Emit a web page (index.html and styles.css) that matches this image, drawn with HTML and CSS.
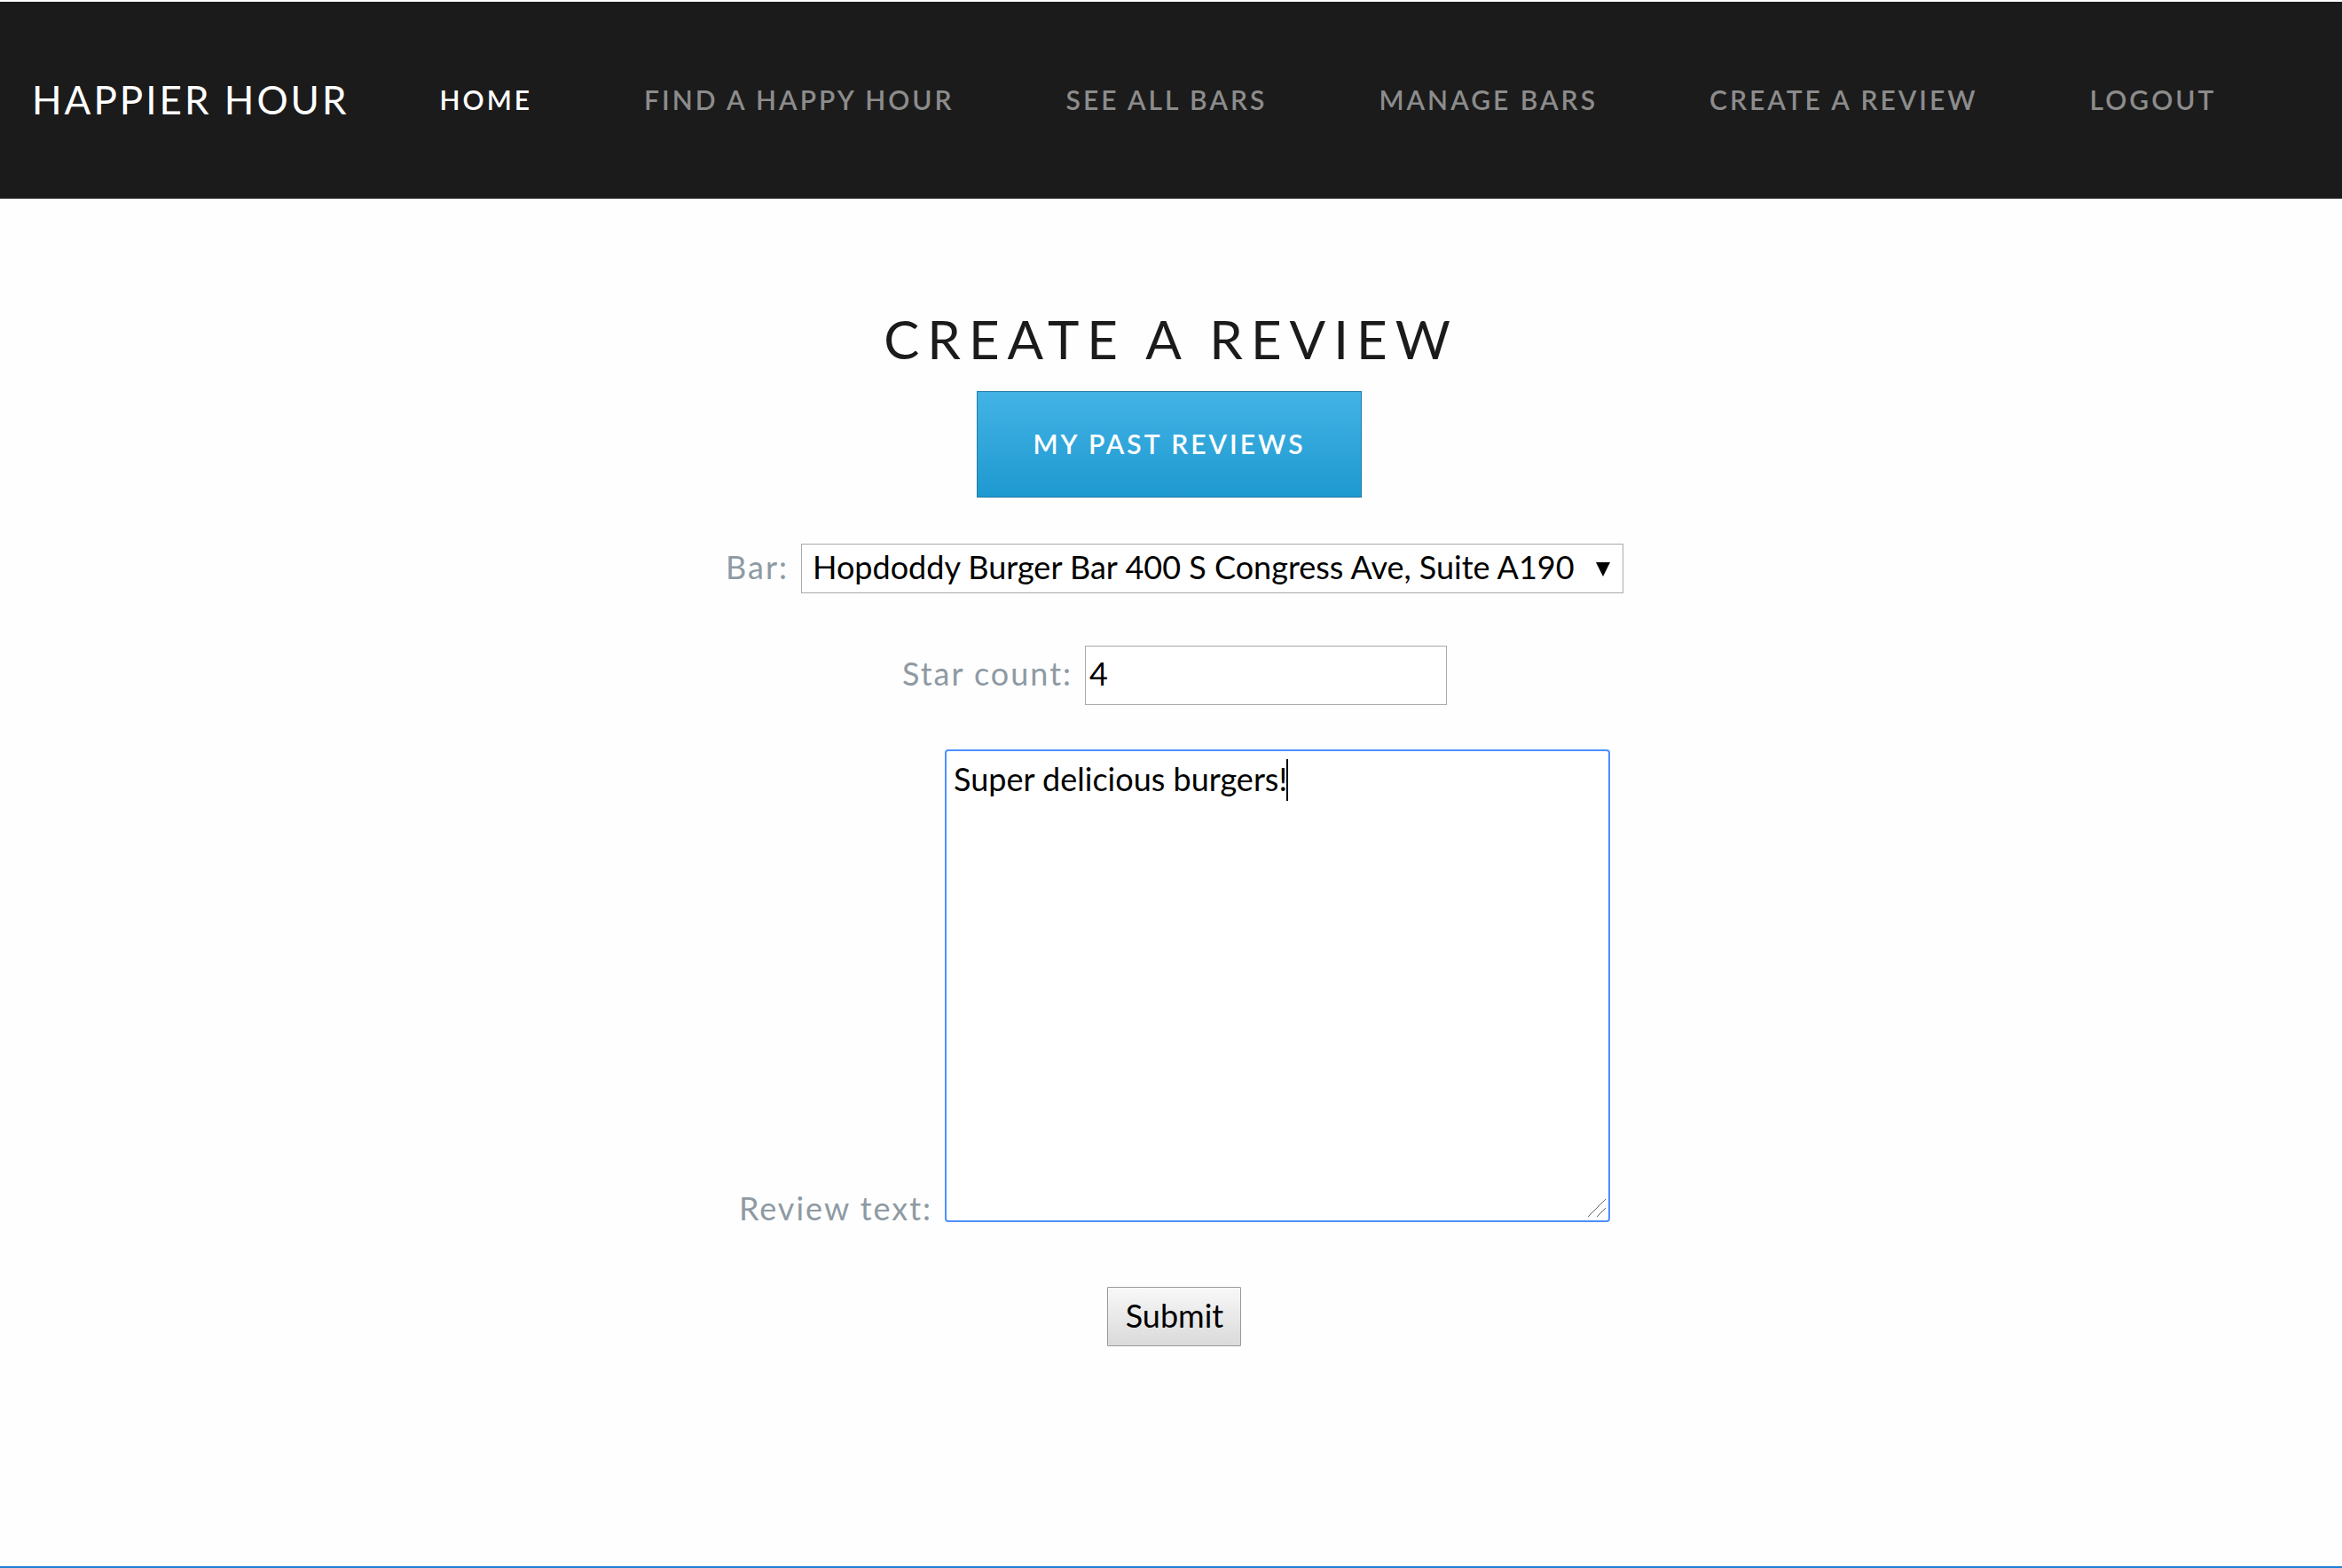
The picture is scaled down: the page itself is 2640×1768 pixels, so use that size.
FILE: index.html
```html
<!DOCTYPE html>
<html lang="en">
<head>
  <meta charset="utf-8">
  <meta name="viewport" content="width=device-width, initial-scale=1">
  <title>Happier Hour</title>
  <link rel="stylesheet" href="styles.css">
</head>
<body>
  <header class="site-header">
    <a class="brand" href="#">HAPPIER HOUR</a>
    <nav class="site-nav">
      <a class="nav-link active" href="#">HOME</a>
      <a class="nav-link" href="#">FIND A HAPPY HOUR</a>
      <a class="nav-link" href="#">SEE ALL BARS</a>
      <a class="nav-link" href="#">MANAGE BARS</a>
      <a class="nav-link" href="#">CREATE A REVIEW</a>
      <a class="nav-link" href="#">LOGOUT</a>
    </nav>
  </header>
  <main class="content">
    <h1 class="title">CREATE A REVIEW</h1>
    <a class="past-button" href="#">MY PAST REVIEWS</a>
    <form class="review-form">
      <div class="row row-bar">
        <label class="label" for="bar">Bar:</label>
        <div class="select-wrap">
          <select class="control select" id="bar">
            <option>Hopdoddy Burger Bar 400 S Congress Ave, Suite A190</option>
          </select>
          <svg class="arrow" viewBox="0 0 16 16" aria-hidden="true"><path d="M0 0h16L8 16z"/></svg>
        </div>
      </div>
      <div class="row row-stars">
        <label class="label" for="stars">Star count:</label>
        <input class="control stars" id="stars" type="text" value="4">
      </div>
      <div class="row row-text">
        <label class="label" for="text">Review text:</label>
        <div class="text-wrap">
          <textarea class="control text" id="text">Super delicious burgers!</textarea>
          <span class="caret"></span>
          <svg class="grip" viewBox="0 0 20 20" aria-hidden="true"><path d="M0 20L20 0M10 20L20 10"/></svg>
        </div>
      </div>
      <button class="submit" type="button">Submit</button>
    </form>
  </main>
</body>
</html>
```
FILE: styles.css
```css
* {
  box-sizing: border-box;
}

body {
  display: flex;
  flex-direction: column;
  min-height: 100vh;
  margin: 0;
  padding-top: 2px;
  border-bottom: 2px solid #1e80d8;
  background: #fefefe;
  font-family: Lato, "Open Sans", sans-serif;
  font-size: 36px;
}

.site-header {
  display: flex;
  align-items: center;
  gap: 102px;
  padding: 80px 36px 82px;
  background: #1b1b1b;
  white-space: nowrap;
}

.brand {
  color: #fff;
  font-size: 44px;
  line-height: 60px;
  letter-spacing: 3px;
  text-decoration: none;
}

.site-nav {
  display: flex;
  gap: 126px;
}

.nav-link {
  color: #8c8c8c;
  font-size: 30px;
  font-weight: 600;
  line-height: 60px;
  letter-spacing: 3px;
  text-decoration: none;
}

.nav-link.active {
  color: #fff;
}

.content {
  display: flex;
  flex-direction: column;
  align-items: center;
  padding: 120px 0;
}

.title {
  margin: 0 0 21px;
  color: #1b1b1b;
  font-size: 60px;
  font-weight: 400;
  line-height: 76px;
  letter-spacing: 9px;
}

.past-button {
  width: 434px;
  margin-right: 4px;
  padding-bottom: 2px;
  border: 1px solid #1f7ba3;
  background: linear-gradient(#43b3e5, #1e99d0);
  color: #fff;
  font-size: 30px;
  font-weight: 600;
  line-height: 116px;
  letter-spacing: 3px;
  text-align: center;
  text-decoration: none;
}

.review-form {
  display: flex;
  flex-direction: column;
  align-items: center;
  padding: 52px 0 0 8px;
}

.row {
  display: flex;
  align-items: baseline;
  gap: 14px;
}

.row-bar {
  margin-bottom: 59px;
}

.row-stars {
  margin-bottom: 50px;
}

.row-text {
  align-items: flex-end;
  margin-bottom: 73px;
}

.label {
  color: #8e9aa3;
  line-height: 32px;
  letter-spacing: 2px;
}

.control {
  display: block;
  margin: 0;
  border: 1px solid #a9a9a9;
  border-radius: 0;
  outline: 0;
  background: #fff;
  color: #000;
  font: inherit;
}

.select-wrap,
.text-wrap {
  position: relative;
}

.select {
  width: 927px;
  height: 56px;
  padding: 0 40px 4px 12px;
  appearance: none;
}

.arrow {
  position: absolute;
  top: 21px;
  right: 15px;
  width: 16px;
  height: 16px;
}

.stars {
  width: 408px;
  height: 67px;
  padding: 0 4px 6px;
}

.text {
  width: 750px;
  height: 533px;
  padding: 7px 8px;
  border: 2px solid #4d90fe;
  border-radius: 4px;
  line-height: 48px;
  resize: none;
}

.caret {
  position: absolute;
  top: 11px;
  left: 385px;
  width: 2px;
  height: 47px;
  background: #000;
}

.grip {
  position: absolute;
  right: 5px;
  bottom: 6px;
  width: 20px;
  height: 20px;
  stroke: #666;
}

.submit {
  width: 151px;
  height: 67px;
  padding: 0 0 4px;
  border: 1px solid #999;
  border-radius: 1px;
  background: linear-gradient(#f8f8f8, #dadada);
  color: #000;
  font: inherit;
}
```
